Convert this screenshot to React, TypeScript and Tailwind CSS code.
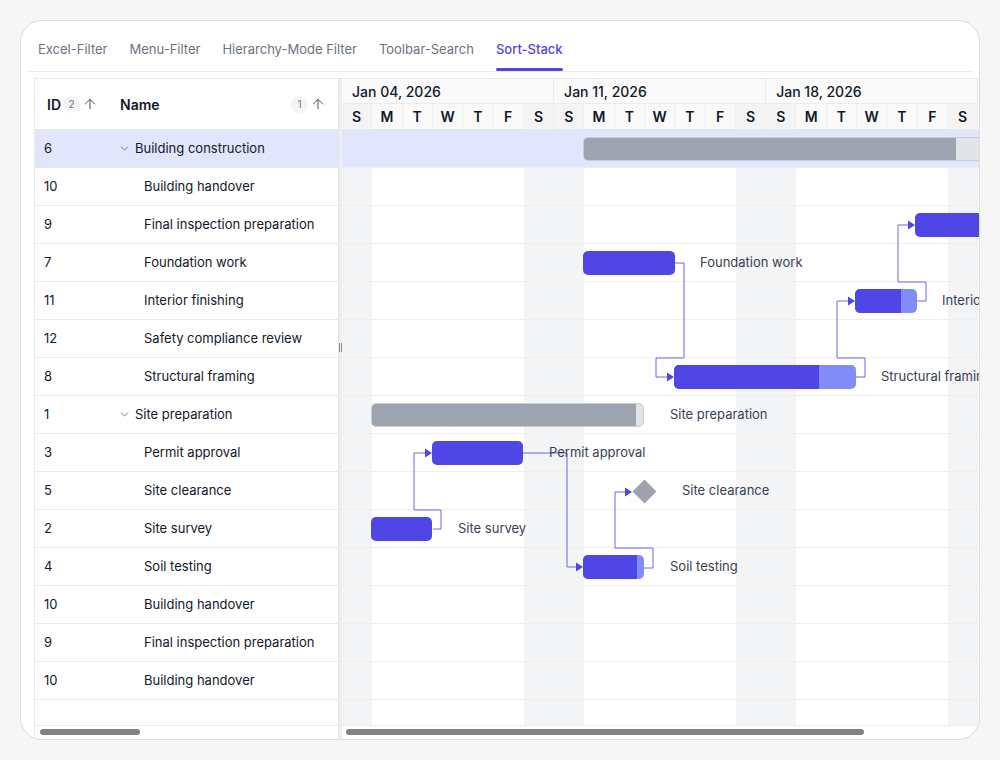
import { ArrowUp, ChevronDown } from 'lucide-react';

type Row = { id: number; name: string; parent?: boolean };

const rows: Row[] = [
  { id: 6, name: 'Building construction', parent: true },
  { id: 10, name: 'Building handover' },
  { id: 9, name: 'Final inspection preparation' },
  { id: 7, name: 'Foundation work' },
  { id: 11, name: 'Interior finishing' },
  { id: 12, name: 'Safety compliance review' },
  { id: 8, name: 'Structural framing' },
  { id: 1, name: 'Site preparation', parent: true },
  { id: 3, name: 'Permit approval' },
  { id: 5, name: 'Site clearance' },
  { id: 2, name: 'Site survey' },
  { id: 4, name: 'Soil testing' },
  { id: 10, name: 'Building handover' },
  { id: 9, name: 'Final inspection preparation' },
  { id: 10, name: 'Building handover' },
];

const tabs = ['Excel-Filter', 'Menu-Filter', 'Hierarchy-Mode Filter', 'Toolbar-Search', 'Sort-Stack'];
const weeks = ['Jan 04, 2026', 'Jan 11, 2026', 'Jan 18, 2026'];
const days = ['S', 'M', 'T', 'W', 'T', 'F', 'S'];
const ROW = 38;

// bars: x/width in px relative to chart body, p = width of the dark (progress) part
const bars = [
  { row: 0, x: 241, w: 420, p: 372, summary: true },
  { row: 2, x: 573, w: 100, p: 100 },
  { row: 3, x: 241, w: 92, p: 92 },
  { row: 4, x: 513, w: 62, p: 46 },
  { row: 6, x: 332, w: 182, p: 145 },
  { row: 7, x: 29, w: 273, p: 264, summary: true },
  { row: 8, x: 90, w: 91, p: 91 },
  { row: 10, x: 29, w: 61, p: 61 },
  { row: 11, x: 241, w: 61, p: 54 },
];

const labels = [
  { row: 3, x: 358, text: 'Foundation work' },
  { row: 4, x: 600, text: 'Interior finishing' },
  { row: 6, x: 539, text: 'Structural framing' },
  { row: 7, x: 328, text: 'Site preparation' },
  { row: 8, x: 207, text: 'Permit approval' },
  { row: 9, x: 340, text: 'Site clearance' },
  { row: 10, x: 116, text: 'Site survey' },
  { row: 11, x: 328, text: 'Soil testing' },
];

const links = [
  { d: 'M91,399 H99 V380 H72 V323 H85', tip: [90, 323] },
  { d: 'M181,323 H225 V437 H236', tip: [241, 437] },
  { d: 'M302,438 H311 V418 H273 V362 H285', tip: [290, 362] },
  { d: 'M333,133 H342 V228 H314 V247 H327', tip: [332, 247] },
  { d: 'M514,247 H523 V228 H495 V171 H508', tip: [513, 171] },
  { d: 'M575,171 H584 V152 H556 V95 H568', tip: [573, 95] },
];

function SortBadge({ n }: { n: number }) {
  return (
    <span className="flex items-center gap-[2px]">
      <span className="w-[17px] h-[17px] rounded-full bg-[#f3f4f6] text-[10px] font-normal text-[#6b7280] flex items-center justify-center">{n}</span>
      <ArrowUp size={16} strokeWidth={1.5} className="text-[#4b5563]" />
    </span>
  );
}

export default function App() {
  const allDays = weeks.flatMap(() => days);

  return (
    <div className="w-[1000px] h-[760px] bg-[#f6f6f6] pt-[20px] px-[20px] font-[Inter,sans-serif]">
      <div className="h-[720px] bg-white border-[1.5px] border-[#dedede] rounded-[22px] overflow-hidden flex flex-col">
        {/* Tabs */}
        <div className="mx-[6px] h-[51px] border-b border-[#ececec] flex items-end">
          {tabs.map((t) => {
            const active = t === 'Sort-Stack';
            return (
              <div key={t} className="px-[11px] h-full flex flex-col justify-end">
                <span className={`text-[13px] leading-none pb-[12px] ${active ? 'text-[#4f46e5] font-medium' : 'text-[#6b7280]'}`}>{t}</span>
                <span className={`h-[3px] rounded-full ${active ? 'bg-[#4f46e5]' : 'bg-transparent'}`} />
              </div>
            );
          })}
        </div>

        {/* Gantt */}
        <div className="mt-[6px] ml-[13px] flex-1 flex border-t border-l border-[#e8e8e8] overflow-hidden text-[13px] text-[#111827]">
          {/* Grid */}
          <div className="w-[303px] shrink-0 flex flex-col">
            <div className="h-[51px] border-b border-[#e5e7eb] flex items-center font-semibold text-[14px]">
              <div className="w-[75px] pl-[12px] flex items-center gap-[2px]">
                ID <SortBadge n={2} />
              </div>
              <div className="flex-1 pl-[10px] pr-[12px] flex items-center justify-between">
                Name <SortBadge n={1} />
              </div>
            </div>
            {rows.map((r, i) => (
              <div key={i} className={`h-[38px] shrink-0 border-b border-[#ebebeb] flex items-center ${i === 0 ? 'bg-[#e2e6fc]' : ''}`}>
                <div className="w-[75px] pl-[9px]">{r.id}</div>
                {r.parent ? (
                  <div className="flex-1 pl-[8px] flex items-center gap-[4px]">
                    <ChevronDown size={13} strokeWidth={1.6} className="text-[#6b7280]" />
                    {r.name}
                  </div>
                ) : (
                  <div className="flex-1 pl-[34px]">{r.name}</div>
                )}
              </div>
            ))}
            <div className="h-[26px] shrink-0 border-b border-[#ebebeb]" />
            <div className="h-[12px] flex items-center pl-[5px]">
              <div className="w-[100px] h-[6px] rounded-full bg-[#828282]" />
            </div>
          </div>

          {/* Splitter */}
          <div className="w-[4px] shrink-0 bg-[#efefef] border-l border-[#e5e5e5] relative">
            <div className="absolute left-[0px] top-[264px] flex gap-[1px]">
              <span className="w-[1px] h-[9px] bg-[#8a8a8a]" />
              <span className="w-[1px] h-[9px] bg-[#8a8a8a]" />
            </div>
          </div>

          {/* Chart */}
          <div className="flex-1 flex flex-col overflow-hidden">
            <div className="h-[51px] border-b border-[#e5e7eb] bg-[#fafafa] shrink-0 flex flex-col">
              <div className="h-[24px] flex">
                {weeks.map((w) => (
                  <div key={w} className="w-[212.1px] shrink-0 border-r border-[#ececec] pl-[10px] flex items-center text-[14px] font-medium">{w}</div>
                ))}
              </div>
              <div className="flex-1 flex border-t border-[#ececec]">
                {allDays.map((d, i) => (
                  <div key={i} className={`w-[30.3px] shrink-0 border-r border-[#efefef] flex items-center justify-center text-[14px] font-semibold ${i % 7 === 0 || i % 7 === 6 ? 'bg-[#f4f4f5]' : ''}`}>{d}</div>
                ))}
              </div>
            </div>

            <div className="relative h-[596px] shrink-0">
              {/* weekend shading */}
              <div className="absolute inset-0 flex">
                {allDays.map((_, i) => (
                  <div key={i} className={`w-[30.3px] shrink-0 ${i % 7 === 0 || i % 7 === 6 ? 'bg-[#f3f4f6]' : ''}`} />
                ))}
              </div>
              {/* rows */}
              <div className="absolute inset-0 flex flex-col">
                {rows.map((_, i) => (
                  <div key={i} className={`h-[38px] shrink-0 border-b border-[#efefef] ${i === 0 ? 'bg-[#e2e6fc]' : ''}`} />
                ))}
                <div className="h-[26px] shrink-0 border-b border-[#efefef]" />
              </div>

              {/* connectors */}
              <svg className="absolute left-0 top-0" width="700" height="596">
                {links.map((l, i) => (
                  <g key={i}>
                    <path d={l.d} fill="none" stroke="#6d65e8" strokeWidth="1" />
                    <polygon
                      points={`${l.tip[0] - 7},${l.tip[1] - 4.5} ${l.tip[0]},${l.tip[1]} ${l.tip[0] - 7},${l.tip[1] + 4.5}`}
                      fill="#4f46e5"
                    />
                  </g>
                ))}
              </svg>

              {/* bars */}
              {bars.map((b, i) => (
                <div
                  key={i}
                  className={`absolute h-[24px] rounded-[5px] overflow-hidden ${b.summary ? 'bg-[#e3e4e8] border border-[#c9ccd3]' : 'bg-[#818cf8]'}`}
                  style={{ left: b.x, top: b.row * ROW + 7, width: b.w }}
                >
                  <div className={`h-full ${b.summary ? 'bg-[#9ea3b0]' : 'bg-[#4f46e5]'}`} style={{ width: b.p }} />
                </div>
              ))}

              {/* milestone */}
              <div className="absolute w-[17px] h-[17px] bg-[#9ca3af] rotate-45" style={{ left: 302 - 8.5, top: 9 * ROW + 19 - 8.5 }} />

              {labels.map((l) => (
                <div
                  key={l.text}
                  className="absolute h-[38px] flex items-center text-[#374151] whitespace-nowrap"
                  style={{ left: l.x, top: l.row * ROW }}
                >
                  {l.text}
                </div>
              ))}
            </div>
            <div className="h-[12px] flex items-center pl-[4px]">
              <div className="w-[518px] h-[6px] rounded-full bg-[#828282]" />
            </div>
          </div>
        </div>
      </div>
    </div>
  );
}
